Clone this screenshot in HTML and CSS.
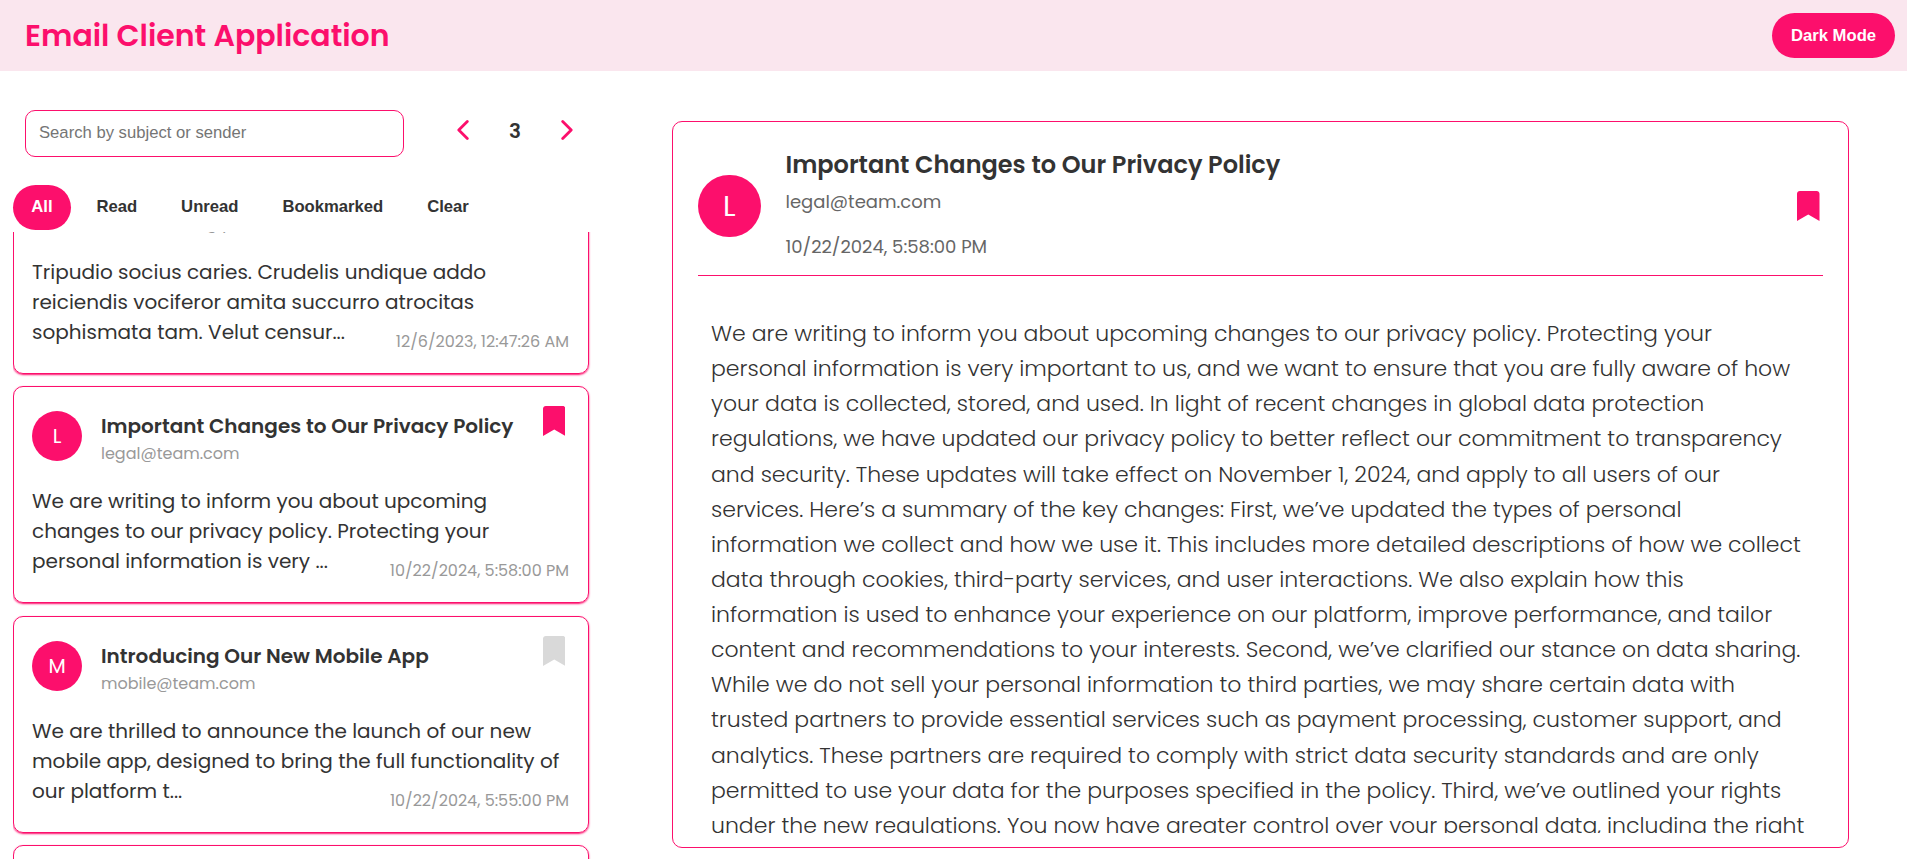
FILE: index.html
```html
<!DOCTYPE html>
<html lang="en">
<head>
<meta charset="utf-8">
<title>Email Client Application</title>
<link rel="stylesheet" href="styles.css">
</head>
<body>
<header class="header">
  <h1 class="header-title">Email Client Application</h1>
  <button class="btn btn-active mode">Dark Mode</button>
</header>
<main class="main">
  <section class="sidebar">
    <div class="toolbar">
      <input class="search" type="text" placeholder="Search by subject or sender">
      <nav class="pager">
        <svg class="chevron" viewBox="0 0 12 20"><path d="M10.3 1.5 1.8 10l8.5 8.5"/></svg>
        <span class="page">3</span>
        <svg class="chevron" viewBox="0 0 12 20"><path d="M1.7 1.5 10.2 10l-8.5 8.5"/></svg>
      </nav>
    </div>
    <div class="filters">
      <button class="btn btn-active">All</button>
      <button class="btn">Read</button>
      <button class="btn">Unread</button>
      <button class="btn">Bookmarked</button>
      <button class="btn">Clear</button>
    </div>
    <div class="list">
      <article class="card card-first">
        <div class="card-head">
          <div class="card-info">
            <p class="card-mail">tobias.wunsngly</p>
          </div>
        </div>
        <p class="preview">Tripudio socius caries. Crudelis undique addo<br>reiciendis vociferor amita succurro atrocitas<br>sophismata tam. Velut censur...</p>
        <time class="card-date">12/6/2023, 12:47:26 AM</time>
      </article>
      <article class="card">
        <div class="card-head">
          <div class="avatar">L</div>
          <div class="card-info">
            <h2 class="card-title">Important Changes to Our Privacy Policy</h2>
            <p class="card-mail">legal@team.com</p>
          </div>
          <svg class="bookmark marked" viewBox="0 0 384 512"><path d="M0 512V48C0 21.5 21.5 0 48 0h288c26.5 0 48 21.5 48 48v464L192 400z"/></svg>
        </div>
        <p class="preview">We are writing to inform you about upcoming changes to our privacy policy. Protecting your personal information is very ...</p>
        <time class="card-date">10/22/2024, 5:58:00 PM</time>
      </article>
      <article class="card">
        <div class="card-head">
          <div class="avatar">M</div>
          <div class="card-info">
            <h2 class="card-title">Introducing Our New Mobile App</h2>
            <p class="card-mail">mobile@team.com</p>
          </div>
          <svg class="bookmark" viewBox="0 0 384 512"><path d="M0 512V48C0 21.5 21.5 0 48 0h288c26.5 0 48 21.5 48 48v464L192 400z"/></svg>
        </div>
        <p class="preview">We are thrilled to announce the launch of our new mobile app, designed to bring the full functionality of our platform t...</p>
        <time class="card-date">10/22/2024, 5:55:00 PM</time>
      </article>
      <article class="card"></article>
    </div>
  </section>
  <section class="detail">
    <div class="detail-head">
      <div class="avatar avatar-lg">L</div>
      <div class="detail-info">
        <h2 class="detail-title">Important Changes to Our Privacy Policy</h2>
        <p class="detail-mail">legal@team.com</p>
        <time class="detail-date">10/22/2024, 5:58:00 PM</time>
      </div>
      <svg class="bookmark marked" viewBox="0 0 384 512"><path d="M0 512V48C0 21.5 21.5 0 48 0h288c26.5 0 48 21.5 48 48v464L192 400z"/></svg>
    </div>
    <div class="detail-body">
      <p>We are writing to inform you about upcoming changes to our privacy policy. Protecting your personal information is very important to us, and we want to ensure that you are fully aware of how your data is collected, stored, and used. In light of recent changes in global data protection regulations, we have updated our privacy policy to better reflect our commitment to transparency and security. These updates will take effect on November 1, 2024, and apply to all users of our services. Here’s a summary of the key changes: First, we’ve updated the types of personal information we collect and how we use it. This includes more detailed descriptions of how we collect data through cookies, third-party services, and user interactions. We also explain how this information is used to enhance your experience on our platform, improve performance, and tailor content and recommendations to your interests. Second, we’ve clarified our stance on data sharing. While we do not sell your personal information to third parties, we may share certain data with trusted partners to provide essential services such as payment processing, customer support, and analytics. These partners are required to comply with strict data security standards and are only permitted to use your data for the purposes specified in the policy. Third, we’ve outlined your rights under the new regulations. You now have greater control over your personal data, including the right</p>
    </div>
  </section>
</main>
</body>
</html>
```
FILE: styles.css
```css
:root {
  --pink: #fc0f6c;
  --text: #333;
}

* { box-sizing: border-box; margin: 0; padding: 0; }

body {
  height: 859px;
  overflow: hidden;
  background: #fff;
  color: var(--text);
  font-family: Poppins, Inter, "Open Sans", sans-serif;
}

.header {
  display: flex;
  align-items: center;
  justify-content: space-between;
  height: 71px;
  padding: 0 12px 0 25px;
  background: #fae6ee;
}

.header-title {
  color: var(--pink);
  font-size: 30px;
  font-weight: 600;
}

.btn {
  height: 45px;
  padding: 0 18.3px 2px;
  border: 0;
  border-radius: 25px;
  background: transparent;
  color: var(--text);
  font: bold 16.67px "Liberation Sans", Arial, sans-serif;
}

.btn-active { background: var(--pink); color: #fff; }

.mode { width: 123px; padding: 0; }

.main { display: flex; height: 788px; }

.sidebar {
  display: flex;
  flex-direction: column;
  width: 602px;
  padding: 39px 13px 0;
}

.toolbar { display: flex; height: 47px; padding-left: 12px; }

.search {
  width: 379px;
  height: 47px;
  padding: 0 13px 2px;
  border: 1px solid var(--pink);
  border-radius: 10px;
  font: 16.67px "Liberation Sans", Arial, sans-serif;
}

.search::placeholder { color: #757575; }

.pager {
  display: flex;
  justify-content: space-between;
  align-items: center;
  width: 116px;
  height: 40px;
  margin-left: 53px;
}

.chevron {
  width: 12px;
  height: 20px;
  fill: none;
  stroke: var(--pink);
  stroke-width: 2.8;
  stroke-linecap: round;
  stroke-linejoin: round;
}

.page { padding-top: 1px; font-size: 20px; font-weight: 600; line-height: 24px; }

.filters { display: flex; gap: 7.3px; margin-top: 28px; }

.list {
  flex: 1;
  margin: 2px -5px 0 0;
  padding-right: 5px;
  overflow: hidden;
}

.card {
  position: relative;
  height: 217px;
  margin-bottom: 12.6px;
  padding: 24px 18px 0;
  border: 1px solid var(--pink);
  border-radius: 10px;
  box-shadow: 0 1px 2px var(--pink);
}

.card-first { margin-top: -75.5px; }
.card-first .card-head { padding: 29.5px 0 0.5px 50px; }

.card-head { display: flex; }

.avatar {
  display: flex;
  align-items: center;
  justify-content: center;
  width: 50px;
  height: 50px;
  flex: none;
  border-radius: 50%;
  background: var(--pink);
  color: #fff;
  font-size: 20px;
}

.card-info { flex: 1; padding-left: 19px; }

.card-title {
  font-size: 20px;
  font-weight: 600;
  line-height: 30px;
  white-space: nowrap;
}

.card-mail { color: #999; font-size: 16px; line-height: 25px; }

.bookmark {
  width: 22.5px;
  height: 30px;
  flex: none;
  margin: -5px 5px 0 0;
  fill: #d9d9d9;
}

.marked { fill: var(--pink); }

.preview {
  margin: 20px -8px 0 0;
  font-size: 20px;
  line-height: 30px;
}

.card-date {
  position: absolute;
  right: 19px;
  bottom: 19px;
  color: #999;
  font-size: 16px;
  line-height: 24px;
}

.detail {
  display: flex;
  flex-direction: column;
  width: 1177px;
  height: 727px;
  margin: 50px 0 0 70px;
  padding: 24px 25px 14px;
  border: 1px solid var(--pink);
  border-radius: 10px;
}

.detail-head {
  display: flex;
  align-items: center;
  height: 130px;
  border-bottom: 1px solid var(--pink);
}

.avatar-lg { width: 62.5px; height: 62.5px; margin-bottom: 9px; font-size: 29px; }

.detail-info {
  display: flex;
  flex: 1;
  flex-direction: column;
  height: 130px;
  padding-left: 25px;
}

.detail-title {
  margin-top: 1px;
  font-size: 24px;
  font-weight: 600;
  line-height: 36px;
}

.detail-mail {
  margin-top: 3px;
  color: #666;
  font-size: 18px;
  line-height: 32px;
}

.detail-date {
  margin-top: 13px;
  color: #666;
  font-size: 18px;
  line-height: 32px;
}

.detail-head .bookmark { margin: 0 3.5px 9px 0; }

.detail-body {
  flex: 1;
  padding: 40px 13px 0;
  overflow: hidden;
  font-size: 22px;
  font-weight: 300;
  line-height: 35.13px;
}
```
